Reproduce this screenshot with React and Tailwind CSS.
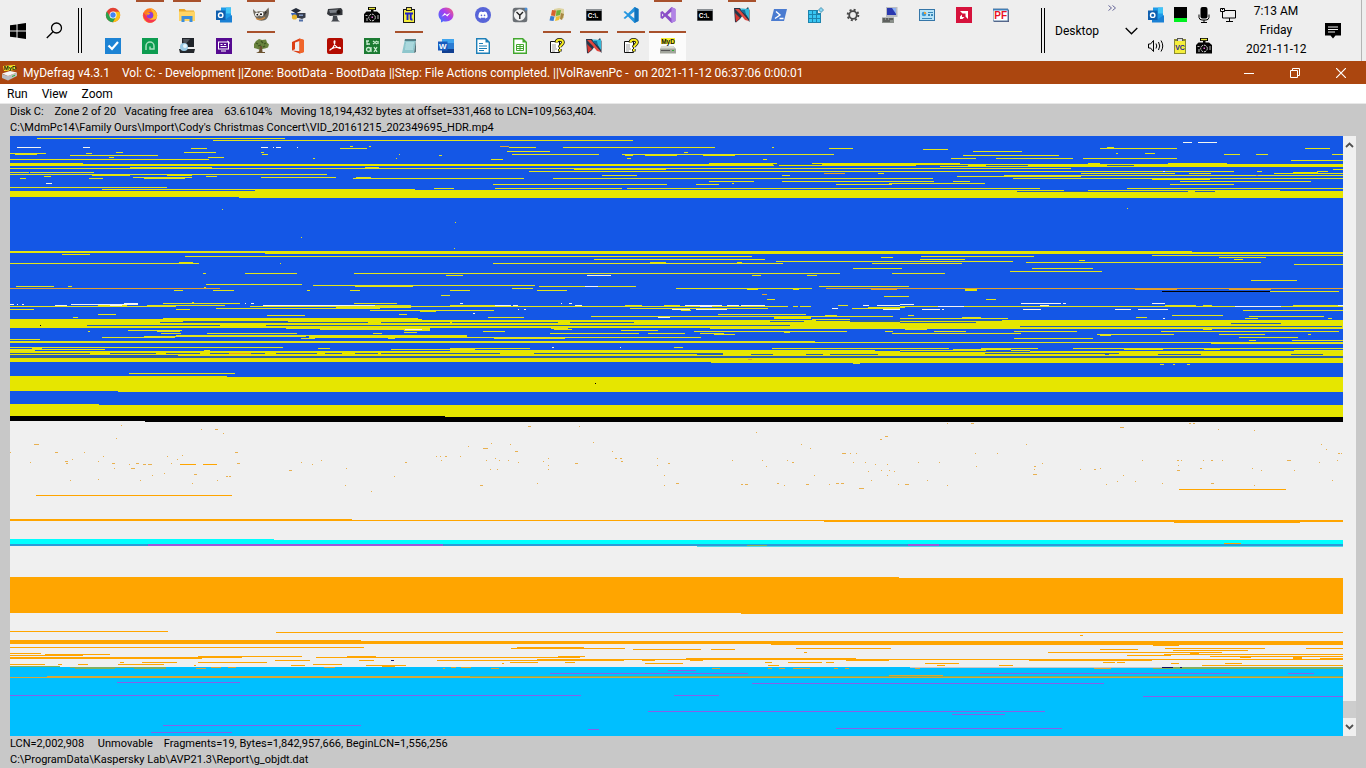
import React from "react";
import { FaDiscord } from "react-icons/fa";

/* ---------- Disk map data: "row start end [height]" ---------- */

const yellowBands = `164 10 1343 2;163 10 83 3;163 709 777;163 812 960;163 1088 1100;163 1168 1227;166 940 1343;191 10 1343 6;190 255 1064;190 1088 1280;197 239 1343;
251 265 1192 3;252 1192 1343 2;252 178 199;252 10 265;319 10 163 9;320 10 1343 8;319 163 422;318 163 418;324 900 1343 4;
336 309 467 2;351 10 1343 3;354 10 1343 2;358 10 1343 4;362 711 1343;377 10 1343 14;376 10 227;391 118 1343;404 10 99;405 10 1343 12;
189 255 415;174 167 192 2;175 92 130;172 1293 1318 2;155 625 633;155 645 677;155 703 735;169 574 666;179 1152 1210;262 179 193;262 650 666;262 737 742;254 62 90;350 450 875;350 900 986;349 1124 1163;349 1204 1220;316 774 811 3;289 747 758;289 793 799;289 965 977 2;311 420 436`;

const yellowLines = `138 37 285;140 213 633;148 191 207;148 340 367;146 350 353;146 369 371;152 184 216;152 116 123;152 261 264;153 86 92;153 10 46;154 15 37;155 70 158;154 262 268;157 109 114;157 208 224;159 10 209;158 313 315;154 399 400;158 396 397;155 439 442;
168 10 1071;167 130 212;167 365 379;172 10 29;172 30 94;174 10 327;177 133 192;178 144 185;176 206 217;177 261 336;177 356 371;178 353 524;176 44 51;178 20 26;178 89 103;187 10 167;189 102 415;188 434 454;
251 10 265;256 185 752;263 10 199;273 203 206;273 245 297;273 354 840;275 446 463;209 222 223;237 301 302;222 455 456;248 454 455;263 280 281;
147 509 536;151 507 550;147 563 715;154 512 599;154 622 834;159 491 503;158 627 631;152 684 688;148 829 853;147 772 774;159 763 767;171 529 1234;175 602 637;175 782 790;173 878 884;178 553 933;181 709 754;181 782 934;184 493 667;184 696 719;184 836 892;183 732 734;183 889 985;188 495 622;188 627 1040;
259 594 765;261 776 1013;263 493 783;263 872 962;257 881 893;268 853 902;273 892 945;275 752 761;275 807 817;
149 923 948;148 1100 1177;147 1107 1114;151 973 1022;155 963 1059;158 951 976;158 996 1073;158 1083 1177;153 1116 1118;153 1145 1155;148 1305 1330;154 1224 1240;154 1256 1268;154 1332 1343;160 1291 1343;169 1333 1343;171 1257 1262;171 1317 1328;173 1081 1175;173 1189 1211;173 1274 1343;175 1004 1343;176 957 1081;178 1013 1343;181 1180 1311;181 953 970;184 1170 1234;188 1127 1343;208 1127 1128;
255 1152 1343;256 921 1034;257 1219 1266;259 920 965;259 1234 1243;260 1079 1085;262 1026 1261;264 1294 1343;268 1032 1093;271 1010 1102;280 1251 1297;
284 206 302;285 313 535;286 355 413;286 16 54;286 68 72;287 204 206;290 174 183;290 213 234;290 307 310;290 350 360;295 441 450;303 163 240;302 192 194;305 98 127;305 147 225;303 354 397;305 336 411;306 10 176;306 250 787;307 336 411;308 216 380;309 10 34;309 176 190;310 370 494;314 98 116;314 399 407;315 267 305;317 73 78;
328 286 430;329 320 430;330 128 182;331 157 180;331 88 90;330 404 430;333 161 181;333 207 297;332 404 417;333 373 382;336 144 306;335 176 467;337 102 175;338 301 315;338 388 395;339 10 40;341 10 815 2;342 815 1343;343 1211 1343;347 10 283;348 32 42;348 318 330;349 10 105;349 391 475;350 10 35;350 204 210;373 129 235;
286 539 636;288 512 533;290 450 470;290 537 567;288 676 812;286 819 909;299 767 775;296 884 909;305 450 495;305 625 642;305 664 680;306 760 788;306 793 798;306 800 811;305 838 848;308 630 768;308 852 900;307 868 905;310 681 691;314 718 806;315 825 837;316 591 893;317 488 524;319 812 850;
331 483 505;328 551 568;330 621 658;329 554 572;333 550 639;333 648 685;334 714 735;333 700 724;331 694 847;331 885 893;328 710 1343;332 784 790;333 892 1021;337 450 701;338 494 565;348 450 530;348 772 949;349 953 1011;348 981 1038;350 1011 1030;348 1073 1343;350 1294 1343;363 853 860;347 674 683;
291 1270 1339;299 986 996;305 1165 1196;305 1203 1212;306 900 1343;305 1293 1343;310 1243 1343;315 1172 1223;315 908 914;316 1249 1324;317 1136 1147;317 962 981;318 900 1008;318 1245 1258;318 1328 1332;329 905 927;329 1203 1212;331 934 966;331 1014 1077;331 1161 1339;334 1097 1174;335 1100 1111;334 1219 1265;334 1308 1311;337 1239 1298;338 1014 1093;340 1249 1256;340 1292 1343;364 1160 1164;364 1173 1175;364 1187 1190`;

const whiteRuns = `147 17 41;147 83 90;147 261 268;147 273 274;147 276 281;147 297 298;183 46 52;142 1183 1192;142 1198 1217;275 587 611;
304 10 14;304 17 18;304 22 24;305 55 67;304 71 138;303 124 138;305 110 122;305 263 375;303 245 246;303 251 254;303 460 463;303 561 562;303 569 572;286 585 598;305 495 511;305 513 518;305 575 582;309 518 519;309 524 526;305 685 722;306 700 712;305 727 739;305 741 765;309 672 690;309 696 727;308 832 838;305 863 869;305 877 900;309 883 900;317 658 670;313 473 475;
303 1021 1061;303 1063 1066;303 1152 1165;304 900 914;305 1040 1049;306 938 964;306 1235 1281;305 1338 1343;309 922 940;309 942 944;309 1023 1041;309 1115 1131;309 1138 1168;329 405 422;318 1163 1165;171 1163 1165;347 552 554;347 620 621`;

const blueGaps = `165 774 779;164 773 822;165 916 968;165 986 1028;165 1107 1134;191 1017 1188;191 1195 1215;
321 183 288;322 160 368;322 381 450;325 87 220;325 266 450;322 452 558;322 570 634;325 450 790;320 816 1002;322 900 976;323 1231 1281;326 1020 1342;321 770 804;321 850 900;
353 10 90;353 110 156;353 166 200;353 210 229;353 251 265;353 276 317;353 325 342;353 355 378;353 381 500;355 10 178;353 534 723;354 697 723;354 751 773;354 806 823;354 830 878;357 10 1343;354 1158 1201;354 1291 1323;354 1105 1109;351 900 1030;356 10 1343;353 985 1119`;

const orangeTop = `146 500 509;173 824 845;288 10 220;288 826 1343;289 871 897;294 762 767;288 1135 1177 2;288 1229 1271 2;353 229 251;359 748 752;175 1256 1258`;
const blackRuns = `416 10 445;417 10 1343 4;421 145 1343;291 1162 1270;383 595 596;325 40 41`;

const orangeRuns = `495 36 232;489 1179 1286;519 10 352;520 10 1343;521 824 1343;522 1174 1300;577 10 899;578 10 1343 35;613 741 1343;631 10 168;632 276 1343;635 1080 1083;640 10 361;641 10 1343 3;644 771 1343;645 1153 1179;
647 10 364;648 511 625;647 517 584;649 633 701;649 711 735;648 796 891;649 1100 1138;648 1165 1265;648 1306 1343;650 1173 1248;652 1048 1222;653 1190 1199;654 1164 1343;655 1127 1171;656 1210 1343;657 1240 1251;657 1293 1302;652 804 807;
653 10 41;654 45 110;655 10 83;656 198 302;657 10 242;658 10 202;657 316 580;656 347 376;656 558 585;660 275 310;660 359 374;660 437 624;659 537 1343;660 1029 1152;658 686 856;660 846 889;662 142 177;662 198 267;662 510 538;662 565 575;664 10 45;664 118 164;664 58 62;664 78 88;665 291 305;664 313 342;665 366 406;663 645 683;660 642 655;666 382 395;665 194 196;663 502 504;662 120 124;
660 690 703;662 765 772;662 788 822;662 826 834;663 925 959;665 937 945;665 768 779;665 999 1013;662 1103 1115;662 1117 1125;663 1171 1179;663 1225 1242;665 1202 1343;658 1293 1302;658 1320 1343;
464 180 196;464 203 217;543 1224 1241`;

const orangeOverBlue = `676 47 470 2;677 10 1343;675 889 943;668 196 206;667 211 221;667 228 236;667 324 335;668 443 445;667 451 456;667 461 471;668 491 499;668 712 720;668 768 772;668 779 785;668 793 810;668 834 838;668 845 849;668 915 920;668 1094 1111`;
const oliveRuns = `666 10 60;667 70 166;668 75 115;668 134 166;668 1153 1343;667 1173 1343;676 470 1343;545 747 767`;
const purpleRuns = `670 668 696;673 550 748;673 980 1230;673 1288 1314;682 117 240;683 752 1104;695 10 581;695 674 719;696 1143 1343;711 648 1045;714 952 1005;725 163 361;728 836 1062;729 588 599;732 151 232`;

/* "x y" or "x y width": single orange clusters in the free area */
const specks = `121 425;201 429;215 429 3;223 433;116 438;34 444 5;55 452 3;84 452;235 452 3;10 452;103 456;72 459;65 461 3;66 463 2;30 462;98 461;112 463 3;114 468;129 464;136 463 3;143 464 3;148 464 4;167 456;171 463;177 459;182 455;237 463 3;131 468 4;152 475;164 473;194 474 3;226 476 2;229 476 2;192 483;70 480;98 479;140 480;217 480;289 470 3;301 462;312 464;321 460;346 468;345 485;371 491;394 476;405 462 2;436 456;440 456;445 456 2;441 460;460 456;468 446;491 443;510 444;483 448 5;486 460;495 458;499 460;508 460;515 451 3;518 462;490 469;497 469;480 485 3;537 483;548 458;543 461;548 465;548 469;528 426 3;579 426;593 442;575 463 3;612 451;615 458 2;620 458 2;621 461 2;657 458;657 465;668 463 2;664 475;664 485;676 483 3;
947 423;971 423 3;756 432;885 436 3;880 439 2;1120 427 4;1189 423 2;1193 423 2;1218 429;1254 430;801 444;810 448;842 453 4;850 453;856 453;975 453;997 453;1026 444;1321 444;1326 449;1338 453 2;1341 453;732 460;762 460;787 460;792 462 2;853 462;865 462;875 464;887 464;918 462;939 462;868 471;894 471;881 470;889 470;766 466;814 475;887 475;871 480;927 480;741 484 2;745 484 3;777 483 2;784 485;806 484 3;829 484;836 483 3;841 483 3;898 484;905 484 4;947 485;859 488 5;976 466;1034 466 2;1034 469;1033 474 4;1042 463;1080 469;1094 469 2;1100 468;1123 475;1117 481;1135 481;1106 484;1162 483;1142 460;1177 460 2;1181 460;1178 465;1177 470 3;1203 460;1211 460 2;1222 460;1200 468 2;1252 468;1261 470;1287 460 4;1294 470;1319 462;1337 460;1211 483 3;1254 485;1332 480`;

function toPath(data) {
  return data
    .split(";")
    .map((run) => {
      const [y, a, b, h = 1] = run.trim().split(" ").map(Number);
      return `M${a} ${y}H${b}v${h}H${a}z`;
    })
    .join("");
}

function specksToPath(data) {
  return data
    .split(";")
    .map((s) => {
      const [x, y, w = 1] = s.trim().split(" ").map(Number);
      return `M${x} ${y}h${w}v1h-${w}z`;
    })
    .join("");
}

function DiskMap() {
  return (
    <svg
      role="img"
      aria-label="Disk map"
      className="block h-full min-h-[600px] w-full"
      viewBox="10 136 1333 600"
      preserveAspectRatio="none"
      shapeRendering="crispEdges"
    >
      <rect x="10" y="136" width="1333" height="281" fill="#1457e6" />
      <rect x="10" y="417" width="1333" height="250" fill="#f0f0f0" />
      <path d={toPath(yellowLines)} fill="#e2e41c" />
      <path d={toPath(yellowBands)} fill="#e6e600" />
      <path d={toPath(blueGaps)} fill="#2a60a8" />
      <path d={toPath(whiteRuns)} fill="#f4f6f0" />
      <path d={toPath(orangeTop)} fill="#e0a030" />
      <path d={toPath(blackRuns)} fill="#000" />
      <path d="M10 539H274v1H1343v4H10z" fill="#00ffff" />
      <path d={toPath("544 10 1343;545 10 1343")} fill="#2b9bd8" />
      <path d={toPath("546 697 1343")} fill="#50dcec" />
      <path d={toPath("544 148 443 2;544 908 939 2")} fill="#9c58dc" />
      <path d={toPath(orangeRuns)} fill="#ffa500" />
      <path d={specksToPath(specks)} fill="#e8b050" />
      <path d="M10 667H910v1H1343V736H10z" fill="#00bfff" />
      <path d={toPath(oliveRuns)} fill="#7fb060" />
      <path d={toPath(orangeOverBlue)} fill="#d8a838" />
      <path d={toPath(purpleRuns)} fill="#8560ea" />
      <path d={toPath("667 1162 1173;667 1180 1182;660 391 394")} fill="#101060" />
    </svg>
  );
}

/* ---------- Icons ---------- */

function Svg({ children, s = 16 }) {
  return (
    <svg width={s} height={s} viewBox="0 0 16 16" aria-hidden="true">
      {children}
    </svg>
  );
}

const T = ({ children, ...p }) => (
  <text fontFamily="Liberation Sans, sans-serif" fontWeight="bold" textAnchor="middle" {...p}>
    {children}
  </text>
);

const Chrome = () => (
  <Svg>
    <circle cx="8" cy="8" r="7.2" fill="#e34133" />
    <path d="M1.8 4.4A7.2 7.2 0 0 0 8 15.2L11 9.8 8 8 5 9.6z" fill="#2ba24c" />
    <path d="M8 15.2A7.2 7.2 0 0 0 14.4 4.7H8l3 5.1z" fill="#fbc116" />
    <circle cx="8" cy="8" r="3.5" fill="#fff" />
    <circle cx="8" cy="8" r="2.7" fill="#4285f4" />
  </Svg>
);
const Firefox = () => (
  <Svg>
    <circle cx="8" cy="8.5" r="7.2" fill="#ff7b1c" />
    <path d="M9 .8c1 2 5.6 3 6.2 7.4A7.2 7.2 0 0 1 8 15.7c-4 0-6.5-2.6-7-5.5 3 4 11 2.5 10.500-2.700C11.300 4.500 8.500 3.500 9 .8z" fill="#ffbd2f" />
    <path d="M1.500 5.500C.5 10 3 15.500 8 15.700c3 0 5.500-1.700 6.500-4-3 2-8 1.500-9.500-2z" fill="#f7364f" />
    <circle cx="8" cy="8.300" r="3.200" fill="#8a3ae0" />
    <path d="M4.500 6c2-1 3.500 0 4 1-1 0-2 .5-2.500 1.500z" fill="#ff9a1f" />
  </Svg>
);
const Folder = () => (
  <Svg>
    <path d="M0 2h5.500L7 3.500h8V8H0z" fill="#e8a92a" />
    <path d="M0 4.500h16V14H0z" fill="#ffd565" />
    <path d="M2.500 9h11v6h-3v-3h-5v3h-3z" fill="#3b8edb" />
  </Svg>
);
const Outlook = () => (
  <Svg>
    <path d="M5 .5h10v13H5z" fill="#1f9be8" />
    <path d="M10 .5h5v6h-5z" fill="#41c5f7" />
    <path d="M4 8l6 4 6-4v7.500H4z" fill="#1a80d4" />
    <path d="M0 3.500h9.500V13H0z" fill="#0f5faf" />
    <circle cx="4.700" cy="8.200" r="2.200" fill="none" stroke="#fff" strokeWidth="1.400" />
  </Svg>
);
const Gimp = () => (
  <Svg>
    <path d="M0 2l3 3C5 3.500 10 4.500 12 4.500L15.500.5c1 4 .5 9-2 11.500-2 2-8 2.500-10-.5C1.500 9.500 0 6 0 2z" fill="#6f695e" />
    <circle cx="4" cy="7.500" r="2" fill="#fff" />
    <circle cx="8.200" cy="7" r="2.200" fill="#fff" />
    <circle cx="4.300" cy="7.700" r=".9" />
    <circle cx="8" cy="7.300" r="1" />
    <path d="M3 11.500c3 1.500 6 1 9-1" stroke="#d98b3a" strokeWidth="1.200" fill="none" />
    <path d="M12 4l2 1-3 4z" fill="#34302b" />
  </Svg>
);
const Devices = () => (
  <Svg>
    <path d="M1 3.500L6 1l5 2.500-5 3z" fill="#252c3a" />
    <path d="M1 6h8v5H3z" fill="#3a64b8" />
    <path d="M6 6h9.500v4.500L12 12l-5-1.500z" fill="#353b48" />
    <circle cx="4.500" cy="10" r="2.600" fill="#e5b32c" />
    <path d="M9 7.500h4v1.500H9z" fill="#7f95c0" />
    <path d="M9 12.500h4v2H9z" fill="#4f6ea8" />
  </Svg>
);
const Camcorder = () => (
  <Svg>
    <path d="M1 2l13-1 1.500 2v5L3 9 0 7z" fill="#33363b" />
    <path d="M2 3l9-.6v3L3 6z" fill="#7b8087" />
    <circle cx="11.500" cy="5" r="2" fill="#111" />
    <path d="M6 9h4l1 4 2 1.500H4L5.500 13z" fill="#43474d" />
  </Svg>
);
const Camera = () => (
  <Svg>
    <path d="M4 0h8v3H9.500v1.500H13L16 7v8.500H0V7l2.500-2.500H7V3H4z" fill="#050505" />
    <path d="M5 .8h6v1.400H5z" fill="#e9e93a" />
    <circle cx="8" cy="10.500" r="3.300" fill="none" stroke="#ddd" strokeDasharray="2 1" />
    <path d="M1.500 8h2v1h-2zM13.500 8h1v4h-1zM2.500 11h1v3h-1z" fill="#bbb" />
    <path d="M7.500 9.500h1.500v1.500H7.500z" fill="#e06ad0" />
  </Svg>
);
const PiClip = () => (
  <Svg>
    <path d="M2 2h12v14H2z" fill="#1a1a1a" />
    <path d="M3 3h10v12H3z" fill="#f5ef3c" />
    <path d="M5 0h6v4H5z" fill="#222" />
    <path d="M6 1h4v2H6z" fill="#eee04a" />
    <path d="M4 6.500h8M6.500 7v6M9.700 7v4.500q0 1.300 1.800 1" stroke="#2020c8" strokeWidth="1.900" fill="none" />
  </Svg>
);
const VcClip = () => (
  <Svg>
    <path d="M2 1h12v15H2z" fill="#8a8a30" />
    <path d="M3 3h10v12H3z" fill="#f5ef3c" />
    <path d="M5 0h6v3H5z" fill="#555" />
    <path d="M6 1h4v2H6z" fill="#ddd" />
    <T x="8" y="12" fontSize="7" fill="#1a1aa0">VC</T>
  </Svg>
);
const Messenger = () => (
  <Svg>
    <defs>
      <linearGradient id="msg" x1="0" y1="1" x2="1" y2="0">
        <stop offset="0" stopColor="#2a7bff" />
        <stop offset=".55" stopColor="#a63cf0" />
        <stop offset="1" stopColor="#ff6470" />
      </linearGradient>
    </defs>
    <path d="M8 .5C3.700.5.5 3.600.5 7.600c0 2.200.9 4 2.500 5.300V15.500l2.400-1.200c.8.200 1.700.3 2.600.3 4.300 0 7.500-3 7.500-7S12.300.5 8 .5z" fill="url(#msg)" />
    <path d="M3.500 9.700L6.700 6l2 1.700 3.800-2L9.300 9.500l-2-1.700z" fill="#fff" />
  </Svg>
);
const Discord = () => (
  <span className="grid size-4 place-items-center rounded-full bg-[#5865d8] text-white">
    <FaDiscord size={10} />
  </span>
);
const Clock = () => (
  <Svg>
    <rect x=".7" y=".7" width="14.600" height="14.600" rx="2.500" fill="#6b7075" />
    <circle cx="7.700" cy="8" r="5.800" fill="#f2f2f2" />
    <path d="M4.500 5l3.300 3.200V12M7.800 8.200L11 5" stroke="#222" strokeWidth="1.400" fill="none" />
    <circle cx="14" cy="2" r="1.500" fill="#4d8fd6" />
  </Svg>
);
const Palette = () => (
  <Svg>
    <path d="M5 2l5-1 5 1v9l-4 1-6-2z" fill="#ddd3a0" />
    <path d="M3 3l4 .5L6 9l-4-.5z" fill="#d8602d" />
    <path d="M7.500 3.500L12 3l-1 5-4 1z" fill="#70b03b" />
    <path d="M1.500 9l4 .5-1 4.500-4-.5z" fill="#3b7bd0" />
    <path d="M7 10l4-1-1 4-4 1z" fill="#f0c132" />
    <path d="M12 6l3 1-2 6-2-1z" fill="#a88743" />
  </Svg>
);
const Cmd = () => (
  <Svg>
    <path d="M0 2h16v12H0z" fill="#8a8f94" />
    <path d="M.5 4h15v9.500H.5z" fill="#000" />
    <T x="7" y="11" fontSize="6.500" fill="#fff">C:\.</T>
  </Svg>
);
const VSCode = () => (
  <Svg>
    <path d="M11.500 0L15.500 2v12l-4 2L5 9.500 2 12 .5 11 4 8 .5 5 2 4l3 2.500z" fill="#2496e0" />
    <path d="M11.500 4.500v7L7 8z" fill="#eee" />
    <path d="M11.500 0L15.500 2v12l-4 2z" fill="#1273bd" />
  </Svg>
);
const VStudio = () => (
  <Svg>
    <path d="M11.500 0L15.500 2v12l-4 2L5 9.500 2.500 12 .5 11V5L2.500 4 5 6.500z" fill="#8a4fc7" />
    <path d="M11.500 4.500v7L7.500 8zM2 6.500L3.500 8 2 9.500z" fill="#eee" />
    <path d="M11.500 0L15.500 2v12l-4 2z" fill="#b183e6" />
  </Svg>
);
const NIcon = () => (
  <Svg>
    <path d="M0 1h6l3 4 5-5 1.500 3v12L9 8l-3 4-4 3.500L1 15z" fill="#273548" />
    <path d="M1 2h4l10 12-4-1-5-6z" fill="#e3463d" />
    <path d="M6 1.500h3l4 .5 2-1v11l-4-6z" fill="#35b7d8" />
    <path d="M1 6l5 5-4 4z" fill="#d8352e" />
    <path d="M6 3l6 5-1-5z" fill="#176d99" />
  </Svg>
);
const PShell = () => (
  <Svg>
    <path d="M3 2h13l-3 12H0z" fill="#4a7bd0" />
    <path d="M5 4.500L9 8l-5 3.500M8.500 11.500h4" stroke="#fff" strokeWidth="1.400" fill="none" />
  </Svg>
);
const Regedit = () => (
  <Svg>
    <path d="M0 3h10v3h3v10H0z" fill="#1d83ad" />
    <path d="M1 4h3v3H1zM5 4h3v3H5zM1 8h3v3H1zM5 8h3v3H5zM9 8h3v3H9zM1 12h3v3H1zM5 12h3v3H5zM9 12h3v3H9z" fill="#38c5f2" />
    <path d="M13 .5L15.500 3 13 5.500 10.500 3z" fill="#8bd5f2" stroke="#24789c" strokeWidth=".7" />
  </Svg>
);
const Computer = () => (
  <Svg>
    <path d="M4 0h11.500v10H4z" fill="#b9bcc2" />
    <path d="M5 1h9v7H5z" fill="#2a38b0" />
    <path d="M10 1h4v6z" fill="#8db0f0" />
    <path d="M0 10.500h12V16H0z" fill="#8a8f8a" />
    <path d="M1 11.500h2v1H1zM4 11.500h2v1H4zM7 11.500h4v1H7zM1 13.500h7v1H1z" fill="#333" />
  </Svg>
);
const Panel = () => (
  <Svg>
    <path d="M0 2h16v12H0z" fill="#3476a8" />
    <path d="M1 3h14v10H1z" fill="#b8e4f8" />
    <circle cx="5" cy="7" r="2.300" fill="#3a9ad6" />
    <path d="M5 7V4.700A2.300 2.300 0 0 1 7.300 7z" fill="#f5a030" />
    <path d="M9 5h5v1H9zM9 7h2v2H9zM12 7h2v2h-2zM3 11h10v1H3z" fill="#3a88b8" />
  </Svg>
);
const Amd = () => (
  <Svg>
    <path d="M0 0h16v16H0z" fill="#d6123c" />
    <path d="M4 4h8v8l-2.500-2.500v-3h-3z" fill="#fff" />
    <path d="M4 9.500l2-2V10h2.500l-2 2H4z" fill="#fff" />
  </Svg>
);
const Pf = () => (
  <Svg>
    <path d="M1 3h15v12H1z" fill="#557" />
    <path d="M0 2h15v12H0z" fill="#fff" stroke="#567aa0" />
    <path d="M0 2h15v1.500H0z" fill="#3f7fb8" />
    <T x="7.700" y="12" fontSize="10" fill="#e81123">PF</T>
  </Svg>
);
const Todo = () => (
  <Svg>
    <path d="M0 0h16v16H0z" fill="#1d83d4" />
    <path d="M3.500 7.500l3.500 3.500 6-7" stroke="#fff" strokeWidth="2.200" fill="none" />
  </Svg>
);
const Naps = () => (
  <Svg>
    <path d="M0 0h16v16H0z" fill="#0d9c50" />
    <path d="M4 12V8a4 4 0 0 1 8 0v3H8V8.500" stroke="#a6e0bd" strokeWidth="1.500" fill="none" />
  </Svg>
);
const Monitor = () => (
  <Svg>
    <path d="M3 0h12v9H3z" fill="#20242a" />
    <path d="M4 1h7L5 8z" fill="#50565e" />
    <path d="M0 11h16l-1 4H1z" fill="#24282c" />
    <circle cx="5" cy="9" r="4" fill="#9ccbe6" />
    <circle cx="6" cy="8" r="2" fill="#e8f5fb" />
  </Svg>
);
const Purple = () => (
  <Svg>
    <path d="M0 0h16v16H0z" fill="#560a91" />
    <rect x="2.500" y="4" width="10" height="7" fill="none" stroke="#fff" />
    <path d="M5 13h5M4.500 6.500h2M8 6.500h2M4.500 8.500h6M11 3a3 3 0 0 1 2.500 2.500" stroke="#fff" fill="none" />
  </Svg>
);
const Tree = () => (
  <Svg>
    <path d="M1 6l2-3 3-2 3 1 4-.5 1 3 2 2-1 3-3 1-3 .5-3 .5-3-1-2-.5z" fill="#69823d" />
    <path d="M3 5l2 1M8 3l2 2M11 6l2-1M5 8l3-1M10 9l2-1" stroke="#3c5520" strokeWidth="1.300" />
    <path d="M7 8h2l.5 6H12v1H3l3-1.500z" fill="#6b5230" />
  </Svg>
);
const Office = () => (
  <Svg>
    <path d="M2 4L9.500.5 14 2v12l-4.500 1.500L2 12.500l7.500.8V3L5 4.500v6.800L2 12.500z" fill="#dc3e15" />
    <path d="M9.500.5L14 2v12l-4.500 1.500z" fill="#f0662b" />
  </Svg>
);
const Acrobat = () => (
  <Svg>
    <rect width="16" height="16" rx="2" fill="#b30b00" />
    <path d="M3 12c2.500-1 5-4.500 5-8.500C8 2.500 7 2.500 7 4c0 3 3 6 6 6.500 1 0 .5-1.500-1-1.300-3 0-7 1-8.500 2-1 .8-.5 1.300-.5.8z" fill="none" stroke="#fff" strokeWidth="1.100" />
  </Svg>
);
const GreenA = () => (
  <Svg>
    <path d="M0 0h16v16H0z" fill="#1c7b33" />
    <path d="M2 3h3M3 6h3M3 3v4M9 3l4 3M13 3L9 6M10 9l3 5M13 9l-3 5M14 3v3" stroke="#c8ecd0" strokeWidth="1.300" />
    <circle cx="4.500" cy="11.500" r="2" fill="none" stroke="#c8ecd0" strokeWidth="1.300" />
    <path d="M7 9v5" stroke="#c8ecd0" strokeWidth="1.300" />
  </Svg>
);
const Notepad = () => (
  <Svg>
    <path d="M4 1h11l-2 14H1z" fill="#8ec6cc" />
    <path d="M4 1h11v2H3.600z" fill="#547d84" />
    <path d="M5 5h8M4.500 7h8M4.300 9h8M4 11h8" stroke="#c7eaed" />
    <path d="M15 2v12l-2 1z" fill="#58747a" />
  </Svg>
);
const Word = () => (
  <Svg>
    <path d="M4 1h12v14H4z" fill="#2b7cd3" />
    <path d="M4 1h12v4H4z" fill="#41a5ee" />
    <path d="M4 11h12v4H4z" fill="#103f91" />
    <path d="M0 3.500h9.500v9H0z" fill="#185abd" />
    <T x="4.700" y="11" fontSize="8" fill="#fff">W</T>
  </Svg>
);
const Doc = () => (
  <Svg>
    <path d="M1.700.7h9l3.600 3.600v11H1.700z" fill="#fff" stroke="#1d7fb8" strokeWidth="1.400" />
    <path d="M10.500.5v4h4" fill="#1d7fb8" />
    <path d="M4 5.500h4M4 8h8M4 10.500h8M4 12.500h5" stroke="#1d7fb8" />
  </Svg>
);
const Sheet = () => (
  <Svg>
    <path d="M1.700.7h9l3.600 3.600v11H1.700z" fill="#fff" stroke="#43a82e" strokeWidth="1.400" />
    <path d="M10.500.5v4h4" fill="#43a82e" />
    <path d="M4.500 6.500h7v6h-7zM4.500 8.500h7M4.500 10.500h7M8 6.500v6" stroke="#43a82e" fill="none" />
  </Svg>
);
const Help = () => (
  <Svg>
    <path d="M1.500 3.500h9v11h-9z" fill="#fff" stroke="#111" />
    <path d="M3 7h4M3 9h4M3 11h5M3 13h3" stroke="#888" strokeWidth=".8" />
    <path d="M7.500 4.500C7.500 1 14 1 14 4.300c0 2.500-3.200 2.700-3.200 5M10.800 11v2.500" stroke="#111" strokeWidth="3.600" fill="none" />
    <path d="M7.500 4.500C7.500 1 14 1 14 4.300c0 2.500-3.200 2.700-3.200 5M10.800 11v2.200" stroke="#f6ec20" strokeWidth="2" fill="none" />
  </Svg>
);
const MyD = () => (
  <Svg>
    <path d="M1 0h14v6H1z" fill="#f5ee2a" />
    <T x="8" y="5.500" fontSize="6.500" fill="#111">MyD</T>
    <path d="M2 8h11l3 3v4.500H0V11z" fill="#a2a59c" />
    <path d="M2 8h11l2 2.500H0z" fill="#dcddd5" />
    <path d="M1 12.500h9" stroke="#555" />
    <path d="M12 12h2v1h-2z" fill="#28b030" />
  </Svg>
);
const MyDSmall = () => (
  <Svg>
    <path d="M1 1l12-1 1 5-12 1z" fill="#f5ee2a" />
    <T x="8" y="5.200" fontSize="6" fill="#111">MyD</T>
    <path d="M0 9l6 2 9-3.500V11l-9 4.500L0 13z" fill="#b9bdc2" />
    <path d="M0 8.500L8 6l7 1.500L6 11z" fill="#f6f6f6" />
    <path d="M10 11l3-1.300v1L10 12z" fill="#2bb52b" />
  </Svg>
);
const Battery = () => (
  <Svg>
    <path d="M2 0h13v11H2z" fill="#000" />
    <path d="M2 11h13v4H2z" fill="#00f020" />
  </Svg>
);
const Mic = () => (
  <Svg>
    <rect x="4.500" y="0" width="7" height="11.500" rx="2" />
    <path d="M3 7.500v3a3 3 0 0 0 3 2.500h4a3 3 0 0 0 3-2.500v-3M8 13v2M5 15.500h6" stroke="#000" fill="none" />
  </Svg>
);
const Net = () => (
  <Svg>
    <path d="M4.500 3.500h11v7.500h-11M9.500 11v3M6 14.500h7M2.500 5v6h2M.5 1.500h4v3h-4z" stroke="#000" fill="none" />
    <path d="M2 2h1v1H2z" />
  </Svg>
);
const Speaker = () => (
  <Svg>
    <path d="M.5 6h2l3-3.500v11L2.500 10h-2zM8 5.500q1.500 2.500 0 5M10.500 4q2.500 4 0 8M13 2.500q3.500 5.500 0 11" stroke="#000" fill="none" />
  </Svg>
);
const Gear = () => (
  <Svg>
    <circle cx="8" cy="8" r="3.800" fill="none" stroke="#484848" strokeWidth="1.800" />
    <circle cx="8" cy="8" r="5.300" fill="none" stroke="#484848" strokeWidth="2" strokeDasharray="2 2.162" />
  </Svg>
);

/* ---------- Taskbar ---------- */

const row1 = [
  ["Chrome", Chrome], ["Firefox", Firefox, 1], ["File Explorer", Folder, 1], ["Outlook", Outlook], ["GIMP", Gimp, 1],
  ["Devices", Devices], ["Camcorder", Camcorder], ["Camera", Camera], ["Pi Clipboard", PiClip], ["Messenger", Messenger],
  ["Discord", Discord], ["Alarms", Clock], ["Paint Tools", Palette], ["Command Prompt", Cmd], ["VS Code", VSCode],
  ["Visual Studio", VStudio, 1], ["Console", Cmd], ["Neo", NIcon, 1], ["PowerShell", PShell], ["Registry", Regedit],
  ["Settings", Gear], ["System", Computer], ["Control Panel", Panel], ["AMD", Amd], ["PF", Pf],
];
const row2 = [
  ["To Do", Todo], ["Naps", Naps], ["Monitor", Monitor], ["Remote", Purple], ["Tree", Tree, 1],
  ["Office", Office], ["Acrobat", Acrobat], ["Shortcuts", GreenA], ["Notepad", Notepad, 1], ["Word", Word],
  ["Writer", Doc], ["Calc", Sheet], ["Help File", Help, 1], ["Neo Editor", NIcon, 1], ["Help Viewer", Help, 1],
  ["MyDefrag", MyD, 2],
];

function TaskButton({ item }) {
  const [name, Icon, state] = item;
  return (
    <button
      type="button"
      aria-label={name}
      className={
        state === 2
          ? "flex h-[30px] w-[37px] flex-col items-center bg-[#fbfbfb]"
          : "flex h-[30px] w-[37px] flex-col items-center"
      }
    >
      <span
        className={
          state === 2 ? "h-0.5 w-full bg-[#a8512c]" : state ? "h-0.5 w-7 bg-[#a8512c]" : "h-0.5 w-7"
        }
      />
      <span className="mt-[5px] grid size-4 place-items-center">
        <Icon />
      </span>
    </button>
  );
}

const DoubleBar = () => <div className="h-[45px] w-1 shrink-0 border-x border-black" />;

function Taskbar() {
  return (
    <header className="flex h-[61px] shrink-0 items-center bg-[#eeeeee]">
      <button type="button" aria-label="Start" className="ml-[10px]">
        <svg width="16" height="16" viewBox="0 0 16 16" aria-hidden="true">
          <path d="M0 2.300L6.500 1.400V7.500H0zM7.500 1.200L16 0v7.500H7.500zM0 8.500h6.500v6.100L0 13.700zM7.500 8.500H16V16l-8.500-1.200z" />
        </svg>
      </button>
      <button type="button" aria-label="Search" className="ml-5">
        <svg width="17" height="17" viewBox="0 0 17 17" fill="none" stroke="#000" strokeWidth="1.300" aria-hidden="true">
          <circle cx="10.500" cy="6" r="5" />
          <path d="M7 9.800L.8 16" />
        </svg>
      </button>
      <div className="ml-[15px] flex">
        <DoubleBar />
      </div>
      <nav aria-label="Applications" className="ml-3 flex flex-col gap-px self-start">
        <div className="flex">
          {row1.map((i) => (
            <TaskButton key={i[0]} item={i} />
          ))}
        </div>
        <div className="flex">
          {row2.map((i) => (
            <TaskButton key={i[0]} item={i} />
          ))}
        </div>
      </nav>
      <div className="ml-auto flex h-full items-center">
        <DoubleBar />
        <div className="relative flex items-center pl-[10px]">
          <button type="button" className="text-[12px] leading-4 text-black">Desktop</button>
          <button type="button" aria-label="More toolbar items" className="absolute -top-[18px] right-[22px] h-2 w-2">
            <svg width="8" height="7" viewBox="0 0 8 7" fill="none" stroke="#66669a" aria-hidden="true" className="block">
              <path d="M.5.5l3 2.500-3 2.500M4.500.5l3 2.500-3 2.500" />
            </svg>
          </button>
          <button type="button" aria-label="Show hidden icons" className="ml-[26px]">
            <svg width="13" height="8" viewBox="0 0 13 8" fill="none" stroke="#000" strokeWidth="1.300" aria-hidden="true" className="block">
              <path d="M.7 1l5.800 5.800L12.300 1" />
            </svg>
          </button>
        </div>
        <div className="ml-[10px] grid grid-cols-4 gap-x-2 gap-y-[15px]">
          <Outlook />
          <Battery />
          <Mic />
          <Net />
          <Speaker />
          <VcClip />
          <Camera />
        </div>
        <time className="ml-[10px] w-[60px] text-center text-[12px] leading-[19px] whitespace-nowrap text-black">
          <div>7:13 AM</div>
          <div>Friday</div>
          <div>2021-11-12</div>
        </time>
        <button type="button" aria-label="Notifications" className="ml-[19px]">
          <svg width="16" height="16" viewBox="0 0 16 16" aria-hidden="true">
            <path d="M0 0h16v12.500h-5.500L8 15.500 5.500 12.500H0z" />
            <path d="M3 4h10M3 6.500h10M3 9h7" stroke="#eee" />
          </svg>
        </button>
        <div className="mr-1 ml-5 h-full w-px bg-[#b4b4b4]" />
      </div>
    </header>
  );
}

function TitleBar() {
  return (
    <div className="flex h-[23px] shrink-0 items-center bg-[#ab460f] text-white">
      <span className="ml-[2px] flex">
        <MyDSmall />
      </span>
      <h1 className="ml-[5px] text-[12px] leading-4 font-normal whitespace-pre">
        {"MyDefrag v4.3.1    Vol: C: - Development ||Zone: BootData - BootData ||Step: File Actions completed. ||VolRavenPc -  on 2021-11-12 06:37:06 0:00:01"}
      </h1>
      <div className="mr-[2px] ml-auto flex">
        <button type="button" aria-label="Minimize" className="grid h-5 w-[46px] place-items-center">
          <svg width="10" height="10" viewBox="0 0 10 10" stroke="#fff" aria-hidden="true"><path d="M0 5.500h10" /></svg>
        </button>
        <button type="button" aria-label="Restore" className="grid h-5 w-[46px] place-items-center">
          <svg width="10" height="10" viewBox="0 0 10 10" fill="none" stroke="#fff" aria-hidden="true">
            <path d="M.5 2.500h7v7h-7zM2.500 2V.5h7v7H8" />
          </svg>
        </button>
        <button type="button" aria-label="Close" className="grid h-5 w-[46px] place-items-center">
          <svg width="10" height="10" viewBox="0 0 10 10" stroke="#fff" strokeWidth="1.200" aria-hidden="true"><path d="M0 0l10 10M10 0L0 10" /></svg>
        </button>
      </div>
    </div>
  );
}

export default function App() {
  return (
    <div className="flex min-h-screen flex-col bg-[#c8c8c8] font-['Roboto','Noto_Sans',sans-serif]">
      <Taskbar />
      <TitleBar />
      <nav aria-label="Menu" className="flex h-5 shrink-0 items-center gap-[14px] border-b border-[#e8e8e8] bg-white px-[7px] text-[12px] leading-4 text-black">
        <button type="button">Run</button>
        <button type="button">View</button>
        <button type="button">Zoom</button>
      </nav>
      <main className="flex flex-1 flex-col px-[10px] text-[11px] leading-4 text-black">
        <div className="h-8 whitespace-pre">
          <p>{"Disk C:    Zone 2 of 20   Vacating free area    63.6104%   Moving 18,194,432 bytes at offset=331,468 to LCN=109,563,404."}</p>
          <p>{"C:\\MdmPc14\\Family Ours\\Import\\Cody's Christmas Concert\\VID_20161215_202349695_HDR.mp4"}</p>
        </div>
        <div className="flex flex-1">
          <div className="min-w-0 flex-1">
            <DiskMap />
          </div>
          <div className="flex w-[13px] shrink-0 flex-col bg-[#f0f0f0]">
            <button type="button" aria-label="Scroll up" className="grid h-[18px] place-items-center">
              <svg width="9" height="6" viewBox="0 0 9 6" fill="none" stroke="#505050" strokeWidth="1.800" aria-hidden="true"><path d="M1 5l3.500-3.500L8 5" /></svg>
            </button>
            <div className="flex flex-1 flex-col justify-end">
              <div className="h-[17px] bg-[#cdcdcd]" />
            </div>
            <button type="button" aria-label="Scroll down" className="grid h-[18px] place-items-center">
              <svg width="9" height="6" viewBox="0 0 9 6" fill="none" stroke="#505050" strokeWidth="1.800" aria-hidden="true"><path d="M1 1l3.500 3.500L8 1" /></svg>
            </button>
          </div>
        </div>
        <div className="h-8 whitespace-pre">
          <p>{"LCN=2,002,908     Unmovable    Fragments=19, Bytes=1,842,957,666, BeginLCN=1,556,256"}</p>
          <p>{"C:\\ProgramData\\Kaspersky Lab\\AVP21.3\\Report\\g_objdt.dat"}</p>
        </div>
      </main>
    </div>
  );
}
